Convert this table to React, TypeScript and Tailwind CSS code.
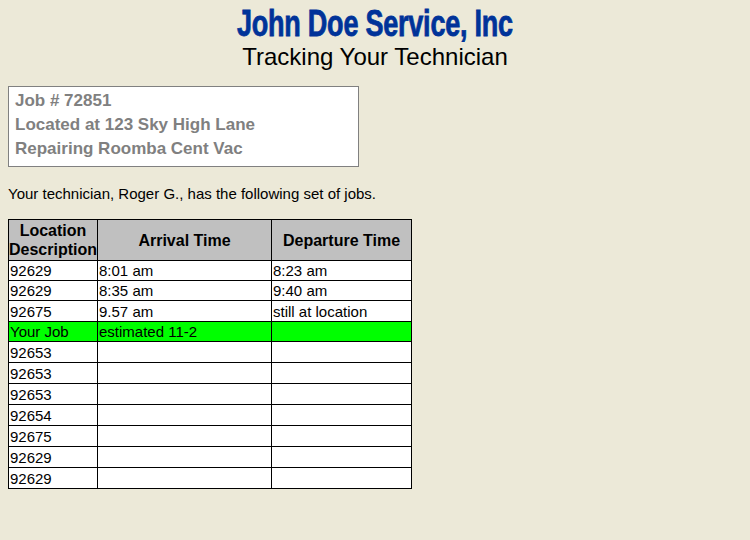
const rows = [
  { loc: "92629", arr: "8:01 am", dep: "8:23 am", h: "h-[20px]" },
  { loc: "92629", arr: "8:35 am", dep: "9:40 am", h: "h-[20px]" },
  { loc: "92675", arr: "9.57 am", dep: "still at location", h: "h-[21px]" },
  { loc: "Your Job", arr: "estimated 11-2", dep: "", h: "h-[20px]", mine: true },
  { loc: "92653", arr: "", dep: "", h: "h-[21px]" },
  { loc: "92653", arr: "", dep: "", h: "h-[21px]" },
  { loc: "92653", arr: "", dep: "", h: "h-[21px]" },
  { loc: "92654", arr: "", dep: "", h: "h-[21px]" },
  { loc: "92675", arr: "", dep: "", h: "h-[21px]" },
  { loc: "92629", arr: "", dep: "", h: "h-[21px]" },
  { loc: "92629", arr: "", dep: "", h: "h-[21px]" },
];

export default function App() {
  return (
    <div className="w-[750px] h-[540px] bg-[#ECE9D8] font-['Liberation_Sans',Arial,sans-serif] text-black overflow-hidden">
      <div className="flex flex-col items-center pt-[5px]">
        <h1 className="text-[36px] leading-[38px] font-bold text-[#003399] tracking-[-0.3px] scale-x-[0.75] [-webkit-text-stroke:0.8px_#003399] whitespace-nowrap">
          John Doe Service, Inc
        </h1>
        <p className="text-[24px] leading-[26px] mt-[1px]">Tracking Your Technician</p>
      </div>

      <div className="ml-[8px] mt-[16px] w-[351px] h-[81px] border border-[#808080] bg-white px-[6px] pt-[2px] text-[17px] leading-[24px] font-bold text-[#808080]">
        <div>Job # 72851</div>
        <div>Located at 123 Sky High Lane</div>
        <div>Repairing Roomba Cent Vac</div>
      </div>

      <p className="ml-[8px] mt-[18px] text-[15px] leading-[18px]">
        Your technician, Roger G., has the following set of jobs.
      </p>

      <table className="ml-[8px] mt-[16px] border-collapse text-[15px] leading-[17px]">
        <thead>
          <tr className="bg-[#C0C0C0] h-[41px]">
            <th className="w-[89px] border border-black font-bold text-[16px] leading-[19px] p-0">
              Location
              <br />
              Description
            </th>
            <th className="w-[174px] border border-black font-bold text-[16px] p-0">Arrival Time</th>
            <th className="w-[140px] border border-black font-bold text-[16px] p-0">Departure Time</th>
          </tr>
        </thead>
        <tbody>
          {rows.map((r, i) => (
            <tr key={i} className={(r.mine ? "bg-[#00FF00] " : "bg-white ") + r.h}>
              <td className="border border-black px-[1px] py-0 text-left">{r.loc}</td>
              <td className="border border-black px-[1px] py-0 text-left">{r.arr}</td>
              <td className="border border-black px-[1px] py-0 text-left">{r.dep}</td>
            </tr>
          ))}
        </tbody>
      </table>
    </div>
  );
}
